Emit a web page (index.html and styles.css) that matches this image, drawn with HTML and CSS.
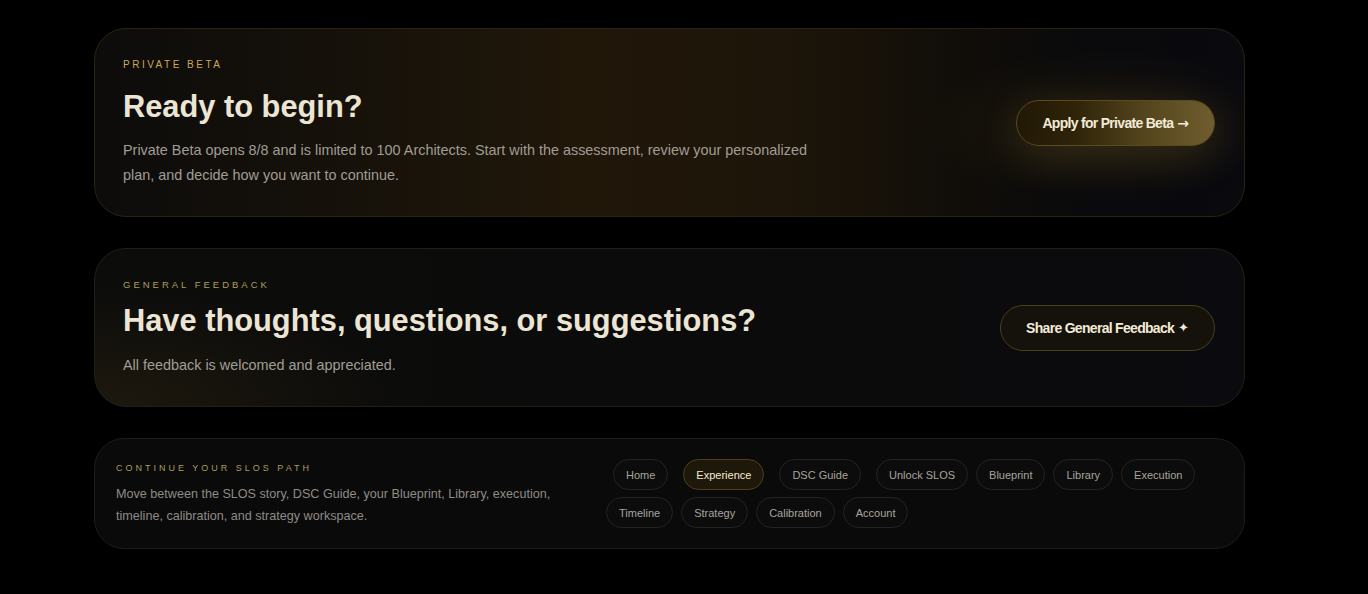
FILE: index.html
```html
<!DOCTYPE html>
<html lang="en">
<head>
<meta charset="utf-8">
<title>SLOS — Private Beta</title>
<link rel="stylesheet" href="styles.css">
</head>
<body>
<main class="stack">

  <section class="panel panel--beta">
    <div class="panel__copy">
      <p class="eyebrow eyebrow--beta">PRIVATE BETA</p>
      <h2 class="panel__title panel__title--beta">Ready to begin?</h2>
      <p class="panel__text">Private Beta opens 8/8 and is limited to 100 Architects. Start with the assessment, review your personalized plan, and decide how you want to continue.</p>
    </div>
    <a class="cta cta--gold" href="#apply">Apply for Private Beta <span class="cta__glyph">→</span></a>
  </section>

  <section class="panel panel--feedback">
    <div class="panel__copy">
      <p class="eyebrow eyebrow--feedback">GENERAL FEEDBACK</p>
      <h2 class="panel__title panel__title--feedback">Have thoughts, questions, or suggestions?</h2>
      <p class="panel__text">All feedback is welcomed and appreciated.</p>
    </div>
    <a class="cta cta--dark" href="#feedback">Share General Feedback <span class="cta__glyph cta__glyph--star">✦</span></a>
  </section>

  <nav class="pathbar">
    <div class="pathbar__copy">
      <p class="eyebrow eyebrow--path">CONTINUE YOUR SLOS PATH</p>
      <p class="pathbar__text">Move between the SLOS story, DSC Guide, your Blueprint, Library, execution, timeline, calibration, and strategy workspace.</p>
    </div>
    <ul class="chips">
      <li><a class="chip chip--lead" href="#home">Home</a></li>
      <li><a class="chip chip--lead chip--active" href="#experience">Experience</a></li>
      <li><a class="chip chip--lead" href="#dsc">DSC Guide</a></li>
      <li><a class="chip chip--lead" href="#unlock">Unlock SLOS</a></li>
      <li><a class="chip" href="#blueprint">Blueprint</a></li>
      <li><a class="chip" href="#library">Library</a></li>
      <li><a class="chip" href="#execution">Execution</a></li>
      <li><a class="chip" href="#timeline">Timeline</a></li>
      <li><a class="chip" href="#strategy">Strategy</a></li>
      <li><a class="chip" href="#calibration">Calibration</a></li>
      <li><a class="chip" href="#account">Account</a></li>
    </ul>
  </nav>

</main>
</body>
</html>
```

FILE: styles.css
```css
* {
  box-sizing: border-box;
}

html,
body {
  margin: 0;
  background: #000;
}

body {
  font-family: "Liberation Sans", Arial, sans-serif;
  color: #ebe5d5;
  padding: 28px 123px 40px 94px;
}

a {
  text-decoration: none;
}

.stack {
  display: flex;
  flex-direction: column;
  gap: 31px;
}

/* ---------- feature panels ---------- */

.panel {
  display: flex;
  align-items: center;
  justify-content: space-between;
  gap: 40px;
  padding: 28px 29px 28px 28px;
  border-radius: 32px;
  border: 1px solid #231f14;
}

.panel--beta {
  border-color: #2a2312;
  background:
    radial-gradient(ellipse 260px 110px at 88% 52%, rgba(120, 92, 30, 0.16), transparent 70%),
    linear-gradient(90deg, #0d0c0b 0%, #16110a 22%, #201709 42%, #1d1509 60%, #100d09 76%, #0a0a0c 86%, #09090e 100%);
}

.panel--feedback {
  background:
    radial-gradient(ellipse 420px 160px at 0% 100%, rgba(80, 60, 22, 0.26), transparent 75%),
    linear-gradient(90deg, #0c0c0b 0%, #0b0b0b 60%, #0b0b0f 100%);
}

.panel__copy {
  display: flex;
  flex-direction: column;
  min-width: 0;
}

.eyebrow {
  margin: 0;
  line-height: 15px;
  text-transform: uppercase;
}

.eyebrow--beta {
  font-size: 10px;
  letter-spacing: 2.5px;
  color: #c9a957;
  margin-bottom: 16px;
}

.eyebrow--feedback {
  font-size: 9.5px;
  letter-spacing: 3px;
  color: #ae9e5c;
  margin-bottom: 10px;
}

.panel__title {
  margin: 0 0 13px;
  font-size: 30.8px;
  line-height: 37px;
  font-weight: 700;
  color: #ece5d4;
}

.panel__title--feedback {
  margin-bottom: 14px;
}

.panel__text {
  margin: 0;
  max-width: 700px;
  font-size: 14.4px;
  line-height: 25px;
  color: #a19d95;
}

/* ---------- call to action buttons ---------- */

.cta {
  flex: none;
  display: inline-flex;
  align-items: center;
  gap: 4px;
  padding: 14px 25px;
  border-radius: 999px;
  font-size: 14px;
  line-height: 16px;
  font-weight: 700;
  letter-spacing: -0.7px;
  color: #f3ebd7;
  white-space: nowrap;
}

.cta--gold {
  border: 1px solid #5a4a1f;
  background: linear-gradient(90deg, #211806 0%, #2f2409 30%, #54451d 65%, #6f5d2e 100%);
  box-shadow: 0 10px 40px rgba(170, 130, 45, 0.22);
}

.cta--dark {
  border: 1px solid #4c3f1d;
  background: #15120c;
}

.cta__glyph {
  font-family: "DejaVu Sans", sans-serif;
  font-weight: 700;
  letter-spacing: 0;
  font-size: 14px;
}

.cta__glyph--star {
  font-size: 13px;
}

/* ---------- path navigation ---------- */

.pathbar {
  display: grid;
  grid-template-columns: 466px 1fr;
  gap: 24px;
  align-items: center;
  padding: 20px 21px;
  border: 1px solid #1d1d1c;
  border-radius: 30px;
  background: #0a0a0a;
}

.eyebrow--path {
  font-size: 9px;
  letter-spacing: 3px;
  line-height: 14px;
  color: #ab9b60;
  margin-bottom: 8px;
}

.pathbar__text {
  margin: 0;
  font-size: 12.6px;
  line-height: 22px;
  color: #8f8b85;
}

.chips {
  display: flex;
  flex-wrap: wrap;
  gap: 7px 8px;
  margin: 0;
  padding: 0;
  list-style: none;
}

.chips li {
  display: flex;
}

.chip {
  display: flex;
  align-items: center;
  height: 31px;
  padding: 0 12px;
  border: 1px solid #232322;
  border-radius: 999px;
  background: #0c0c0c;
  font-size: 11px;
  color: #a8a49c;
  white-space: nowrap;
}

.chip--lead {
  margin-left: 7px;
}

.chip--active {
  border-color: #4d4019;
  background: #1d180a;
  color: #f4ebd0;
}
```
